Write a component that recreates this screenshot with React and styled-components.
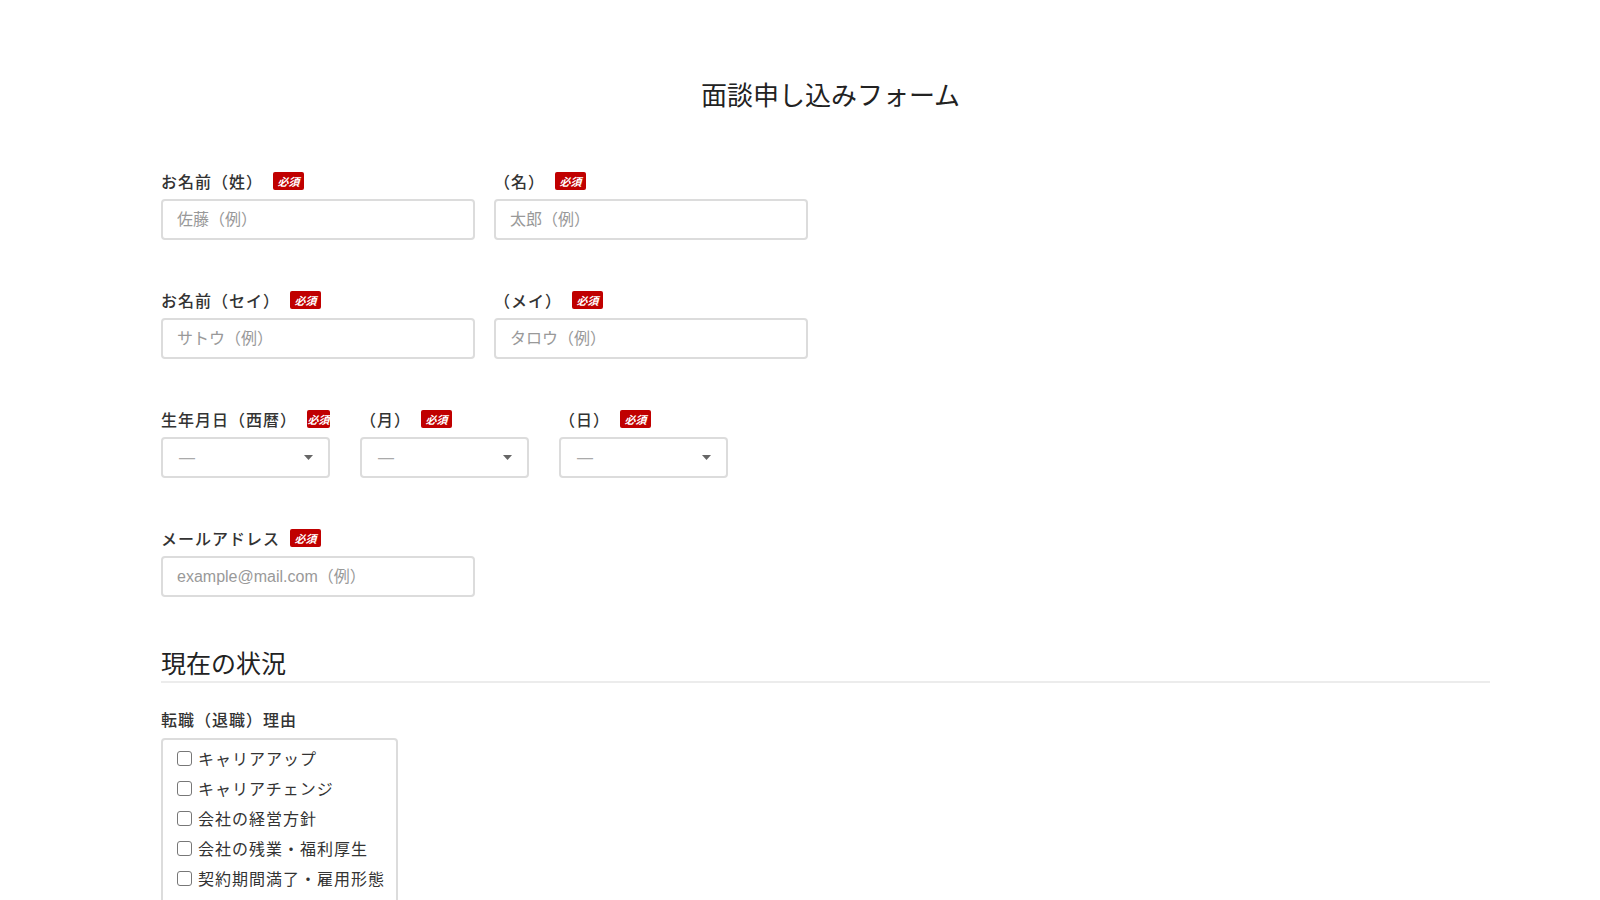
import React from 'react';
import styled, { createGlobalStyle } from 'styled-components';

const GlobalStyle = createGlobalStyle`
  body {
    margin: 0;
    background: #fff;
    color: #333;
    font-family: "Liberation Sans", "Noto Sans CJK JP", sans-serif;
  }
`;

const Page = styled.div`
  padding: 78px 110px 0 161px;
  height: 822px;
  overflow: hidden;
`;

const Title = styled.h1`
  margin: 0 0 55px;
  padding-left: 10px;
  text-align: center;
  font-size: 26px;
  line-height: 36px;
  font-weight: 400;
  color: #222;
`;

const FieldRow = styled.div`
  display: flex;
  gap: ${props => props.gap}px;
  margin-bottom: 48px;
`;

const Field = styled.div`
  display: flex;
  flex-direction: column;
  width: ${props => props.width}px;
`;

const LabelRow = styled.div`
  display: flex;
  align-items: center;
  height: 24px;
  margin-bottom: ${props => props.space || 6}px;
  font-size: 16px;
  letter-spacing: 1px;
  font-weight: 500;
  color: #333;
  white-space: nowrap;
`;

const Badge = styled.span`
  display: inline-flex;
  align-items: center;
  justify-content: center;
  margin-left: 10px;
  width: 31px;
  height: 18px;
  border-radius: 2px;
  background: #c00000;
  color: #fff;
  font-size: 11px;
  font-weight: 700;
  letter-spacing: 0;
  font-style: italic;
`;

const TextInput = styled.input`
  box-sizing: border-box;
  width: 100%;
  height: 41px;
  padding: 0 14px;
  border: 2px solid #dcdcdc;
  border-radius: 4px;
  font-family: inherit;
  font-size: 16px;
  color: #333;
  outline: none;

  &::placeholder {
    color: #999;
  }
`;

const SelectBox = styled.div`
  box-sizing: border-box;
  display: flex;
  align-items: center;
  justify-content: space-between;
  height: 41px;
  padding: 0 15px 0 16px;
  border: 2px solid #dcdcdc;
  border-radius: 4px;
  color: #aaa;
  font-size: 16px;
`;

const Heading = styled.h2`
  margin: 50px 0 0;
  font-size: 25px;
  line-height: 34px;
  font-weight: 400;
  color: #222;
  border-bottom: 2px solid #ececec;
`;

const Section = styled.div`
  margin-top: 24px;
`;

const CheckList = styled.div`
  box-sizing: border-box;
  width: 237px;
  height: 200px;
  padding: 3px 0 0 14px;
  border: 2px solid #dcdcdc;
  border-radius: 4px;
`;

const CheckItem = styled.label`
  display: flex;
  align-items: center;
  height: 30px;
  font-size: 16px;
  letter-spacing: 1px;
  color: #333;
  white-space: nowrap;
`;

const Box = styled.span`
  box-sizing: border-box;
  flex: none;
  width: 15px;
  height: 15px;
  margin-right: 6px;
  border: 1.5px solid #777;
  border-radius: 3px;
`;

const Arrow = () => (
  <svg width="9" height="5" viewBox="0 0 9 5">
    <path d="M0 0h9L4.5 5z" fill="#666" />
  </svg>
);

const Required = ({ children }) => (
  <LabelRow>
    {children}
    <Badge>必須</Badge>
  </LabelRow>
);

const reasons = [
  'キャリアアップ',
  'キャリアチェンジ',
  '会社の経営方針',
  '会社の残業・福利厚生',
  '契約期間満了・雇用形態',
];

export default function App() {
  return (
    <>
      <GlobalStyle />
      <Page>
        <Title>面談申し込みフォーム</Title>

        <FieldRow gap={19}>
          <Field width={314}>
            <Required>お名前（姓）</Required>
            <TextInput placeholder="佐藤（例）" />
          </Field>
          <Field width={314}>
            <Required>（名）</Required>
            <TextInput placeholder="太郎（例）" />
          </Field>
        </FieldRow>

        <FieldRow gap={19}>
          <Field width={314}>
            <Required>お名前（セイ）</Required>
            <TextInput placeholder="サトウ（例）" />
          </Field>
          <Field width={314}>
            <Required>（メイ）</Required>
            <TextInput placeholder="タロウ（例）" />
          </Field>
        </FieldRow>

        <FieldRow gap={30}>
          {['生年月日（西暦）', '（月）', '（日）'].map(label => (
            <Field width={169} key={label}>
              <Required>{label}</Required>
              <SelectBox>
                <span>—</span>
                <Arrow />
              </SelectBox>
            </Field>
          ))}
        </FieldRow>

        <FieldRow gap={19}>
          <Field width={314}>
            <Required>メールアドレス</Required>
            <TextInput placeholder="example@mail.com（例）" />
          </Field>
        </FieldRow>

        <Heading>現在の状況</Heading>

        <Section>
          <LabelRow space={7}>転職（退職）理由</LabelRow>
          <CheckList>
            {reasons.map(r => (
              <CheckItem key={r}>
                <Box />
                {r}
              </CheckItem>
            ))}
          </CheckList>
        </Section>
      </Page>
    </>
  );
}
